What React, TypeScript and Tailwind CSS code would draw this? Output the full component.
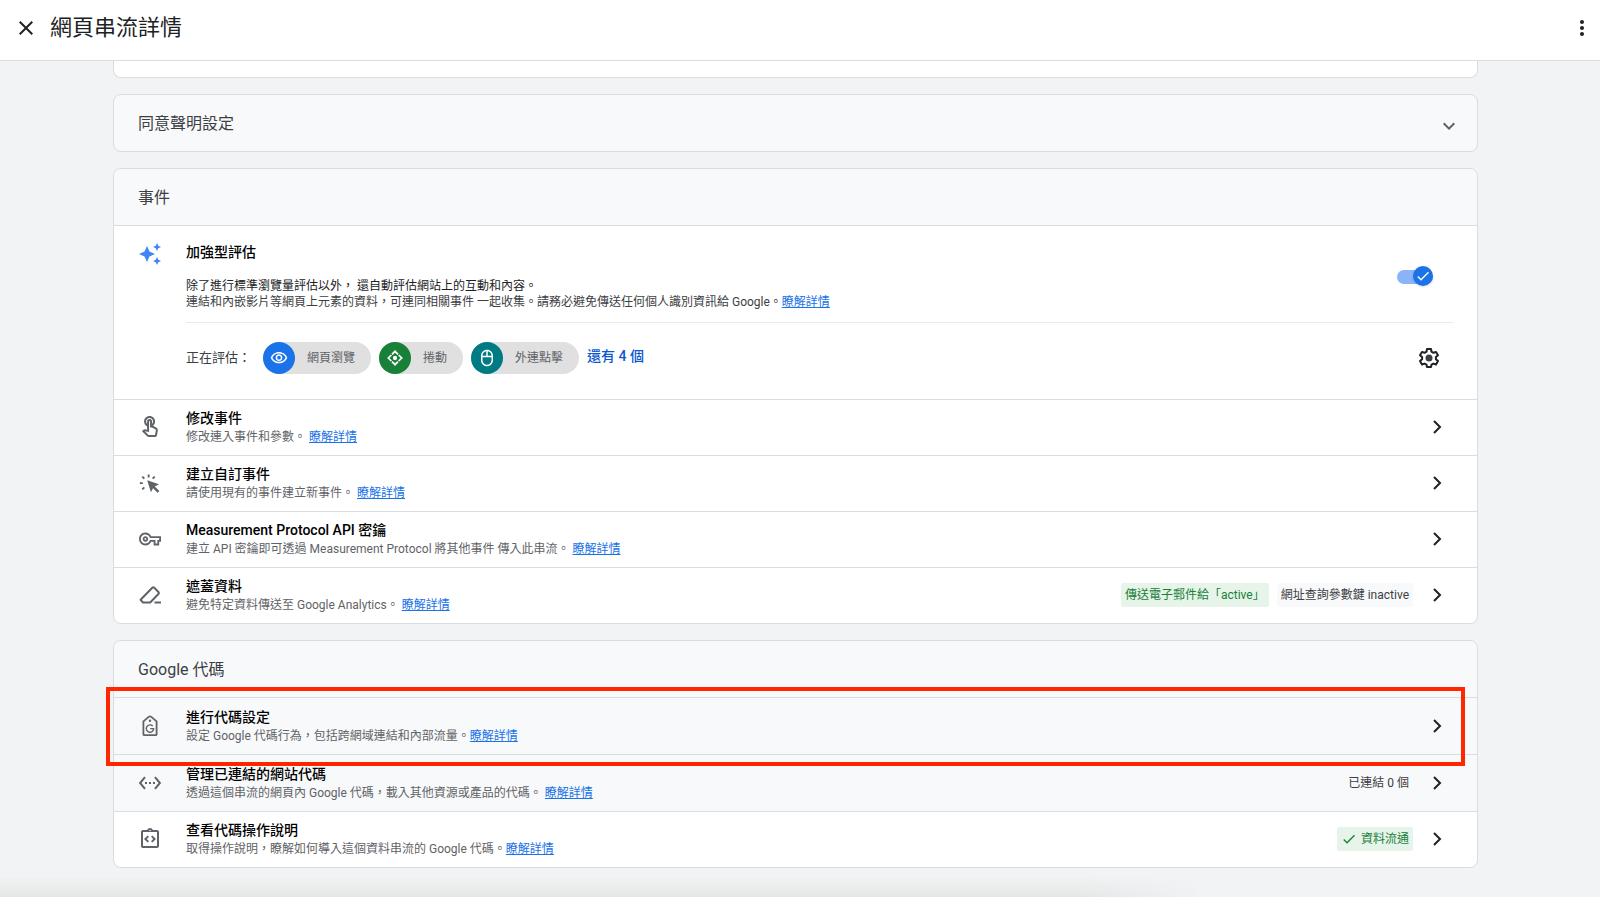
import type { ReactNode } from "react"
import {
  MdAutoAwesome,
  MdCheck,
  MdClose,
  MdKeyboardArrowDown,
  MdMoreVert,
  MdOutlineIntegrationInstructions,
  MdOutlineMouse,
  MdOutlineTouchApp,
  MdOutlineVisibility,
  MdOutlineVpnKey,
  MdSettingsEthernet,
} from "react-icons/md"

function MoreLink() {
  return (
    <a href="#more" className="text-[#1a73e8] underline">
      瞭解詳情
    </a>
  )
}

function ChevronRight() {
  return (
    <svg viewBox="0 0 24 24" className="size-6 shrink-0" fill="none" stroke="#202124" strokeWidth="2">
      <path d="M9 6l6 6-6 6" />
    </svg>
  )
}

function ClickIcon() {
  return (
    <svg viewBox="0 0 24 24" className="size-6" fill="#5f6368">
      <path d="M9.200 9.200l11.800 4-4.200 2.200 4.600 4.600-1.800 1.800-4.600-4.600-2.100 4z" />
      <path d="M9.700 3.500h1.900v3H9.700zM1.800 11.200h3v1.900h-3zM3.600 6.200L5 4.900 7 7 5.700 8.300zM14 7l2-2.100 1.400 1.300-2.100 2.100zM3.600 17.800l2.100-2.100L7 17l-2.100 2.100z" />
    </svg>
  )
}

function EraserIcon() {
  return (
    <svg viewBox="0 0 24 24" className="size-6" fill="none" stroke="#5f6368" strokeWidth="2" strokeLinejoin="round">
      <path d="M5 19.500h7.200l8.200-8.500c.6-.6.6-1.400 0-2l-4.100-4.200c-.6-.6-1.400-.6-2 0L2.600 16.800z" />
      <path d="M16.500 19.500H23" />
    </svg>
  )
}

function TagIcon() {
  return (
    <svg viewBox="0 0 24 24" className="size-6" fill="none" stroke="#5f6368" strokeWidth="1.800">
      <path d="M5.400 7.400l5.300-4.500c.8-.6 1.800-.6 2.600 0l5.300 4.500v12.800c0 .6-.4 1-1 1H6.400c-.6 0-1-.4-1-1z" strokeLinejoin="round" />
      <circle cx="12" cy="6.800" r="1.200" fill="#5f6368" stroke="none" />
      <path d="M14.700 12a3.700 3.700 0 1 0 1 2.600h-3.500" strokeWidth="1.400" />
    </svg>
  )
}

function ScrollIcon() {
  return (
    <svg viewBox="0 0 24 24" className="size-4" fill="none" stroke="currentColor" strokeWidth="2.600">
      <path d="M7.500 6.500L12 2l4.500 4.500M7.500 17.500L12 22l4.500-4.500M6.500 7.500L2 12l4.500 4.500M17.500 7.500L22 12l-4.500 4.500" />
      <circle cx="12" cy="12" r="3.200" fill="currentColor" stroke="none" />
    </svg>
  )
}

function GearIcon() {
  return (
    <svg viewBox="0 0 24 24" className="size-6" fill="none" stroke="#202124" strokeWidth="2" strokeLinejoin="round">
      <path d="M10 3h4l.5 2.700 1.900 1.100 2.600-.9 2 3.400-2.100 1.800v2.200l2.100 1.800-2 3.400-2.600-.9-1.900 1.100L14 21h-4l-.5-2.300-1.900-1.100-2.600.9-2-3.400 2.100-1.800v-2.200L3 9.300l2-3.400 2.600.9 1.900-1.100z" />
      <circle cx="12" cy="12" r="3.500" fill="#3c4043" stroke="none" />
    </svg>
  )
}

type ChipProps = { icon: ReactNode; label: string; color: string }

function Chip({ icon, label, color }: ChipProps) {
  return (
    <span className="flex h-8 items-center rounded-full bg-[#e0e0e0] pr-4 text-xs text-[#5f6368]">
      <span className={`mr-3 flex size-8 items-center justify-center rounded-full text-white ${color}`}>{icon}</span>
      {label}
    </span>
  )
}

type RowProps = {
  icon: ReactNode
  title: string
  text: string
  end?: ReactNode
  className?: string
  children?: ReactNode
}

function Row({ icon, title, text, end, className = "", children }: RowProps) {
  return (
    <li className={`relative flex items-center border-t border-[#dadce0] pr-7 pl-6 ${className}`}>
      <span className="mr-6 flex size-6 shrink-0 items-center justify-center text-[#5f6368]">{icon}</span>
      <div className="min-w-0 flex-1">
        <h3 className="text-sm leading-5 font-medium text-black">{title}</h3>
        <p className="text-xs leading-[18px] text-[#5f6368]">
          {text}
          <MoreLink />
        </p>
      </div>
      {end}
      <button type="button" aria-label={title} className="ml-3">
        <ChevronRight />
      </button>
      {children}
    </li>
  )
}

function Badge({ tone, children }: { tone: string; children: ReactNode }) {
  return <span className={`flex h-6 items-center gap-1 rounded-xs px-1 text-xs ${tone}`}>{children}</span>
}

export default function App() {
  return (
    <div className="relative flex min-h-screen flex-col bg-[#f1f3f4] font-[Roboto,'Noto_Sans_CJK_TC',sans-serif] text-[#3c4043]">
      <header className="flex h-[61px] items-center border-b border-[#dadce0] bg-white px-3.5 pb-1">
        <button type="button" aria-label="關閉" className="mr-3">
          <MdClose className="size-6 text-[#202124]" />
        </button>
        <h1 className="flex-1 text-[22px] leading-7 text-[#202124]">網頁串流詳情</h1>
        <button type="button" aria-label="更多選項" className="-mr-2">
          <MdMoreVert className="size-6 text-[#202124]" />
        </button>
      </header>

      <main className="flex-1 pr-[122px] pl-[113px]">
        <div className="mb-4 h-[17px] rounded-b-lg border border-t-0 border-[#dadce0] bg-white" />

        <section className="mb-4 flex h-[58px] items-center justify-between rounded-lg border border-[#dadce0] bg-[#f8f9fa] px-6">
          <h2 className="pt-0.5 text-base">同意聲明設定</h2>
          <button type="button" aria-label="展開" className="-mr-2 pt-1.5">
            <MdKeyboardArrowDown className="size-6 text-[#5f6368]" />
          </button>
        </section>

        <section className="mb-4 rounded-lg border border-[#dadce0] bg-white">
          <h2 className="flex h-14 items-center rounded-t-lg bg-[#f8f9fa] px-6 pt-0.5 text-base">事件</h2>

          <div className="flex h-[174px] border-t border-[#dadce0] px-6">
            <MdAutoAwesome className="mt-4 mr-6 size-6 shrink-0 text-[#4285f4]" />
            <div className="flex-1">
              <div className="flex h-[97px] items-center justify-between border-b border-[#e8eaed] pt-1">
                <div>
                  <h3 className="mb-4 text-sm leading-5 font-medium text-black">加強型評估</h3>
                  <p className="text-xs leading-4 text-[#202124]">
                    除了進行標準瀏覽量評估以外， 還自動評估網站上的互動和內容。
                  </p>
                  <p className="text-xs leading-4">
                    連結和內嵌影片等網頁上元素的資料，可連同相關事件 一起收集。請務必避免傳送任何個人識別資訊給 Google。
                    <MoreLink />
                  </p>
                </div>
                <label className="relative mr-5 block h-5 w-9 shrink-0">
                  <input type="checkbox" role="switch" defaultChecked aria-label="加強型評估" className="peer sr-only" />
                  <span className="absolute inset-x-0 top-1 h-3.5 rounded-full bg-[#8ab4f8]" />
                  <span className="absolute top-0 right-0 flex size-5 items-center justify-center rounded-full bg-[#1a73e8] shadow">
                    <MdCheck className="size-4 text-white" />
                  </span>
                </label>
              </div>

              <div className="flex h-[70px] items-center">
                <span className="mr-3 text-[13px]">正在評估：</span>
                <div className="flex flex-1 items-center gap-2">
                  <Chip icon={<MdOutlineVisibility className="size-[18px]" />} label="網頁瀏覽" color="bg-[#1a73e8]" />
                  <Chip icon={<ScrollIcon />} label="捲動" color="bg-[#188038]" />
                  <Chip icon={<MdOutlineMouse className="size-[18px]" />} label="外連點擊" color="bg-[#007b83]" />
                  <a href="#all" className="pb-1 text-sm font-medium text-[#0b57d0]">
                    還有 4 個
                  </a>
                </div>
                <button type="button" aria-label="設定" className="mr-3">
                  <GearIcon />
                </button>
              </div>
            </div>
          </div>

          <ul>
            <Row className="h-14 pb-0.5" icon={<MdOutlineTouchApp className="size-6" />} title="修改事件" text="修改連入事件和參數。 " />
            <Row className="h-14 pb-0.5" icon={<ClickIcon />} title="建立自訂事件" text="請使用現有的事件建立新事件。 " />
            <Row
              className="h-14 pb-0.5"
              icon={<MdOutlineVpnKey className="size-[22px]" />}
              title="Measurement Protocol API 密鑰"
              text="建立 API 密鑰即可透過 Measurement Protocol 將其他事件 傳入此串流。 "
            />
            <Row
              className="h-14 pb-0.5"
              icon={<EraserIcon />}
              title="遮蓋資料"
              text="避免特定資料傳送至 Google Analytics。 "
              end={
                <div className="flex gap-2">
                  <Badge tone="bg-[#e6f4ea] text-[#188038]">傳送電子郵件給「active」</Badge>
                  <Badge tone="bg-[#f8f9fa]">網址查詢參數鍵 inactive</Badge>
                </div>
              }
            />
          </ul>
        </section>

        <section className="rounded-lg border border-[#dadce0] bg-white">
          <h2 className="flex h-14 items-center rounded-t-lg bg-[#f8f9fa] px-6 pt-0.5 text-base">Google 代碼</h2>
          <ul>
            <Row
              className="h-[57px] bg-[#f8f9fa]"
              icon={<TagIcon />}
              title="進行代碼設定"
              text="設定 Google 代碼行為，包括跨網域連結和內部流量。"
            >
              {/* highlight frame */}
              <span className="pointer-events-none absolute -top-[11px] right-3 -bottom-3 -left-2 z-10 border-4 border-[#ff2600]" />
            </Row>
            <Row
              className="h-[57px] bg-[#f8f9fa]"
              icon={<MdSettingsEthernet className="size-6" />}
              title="管理已連結的網站代碼"
              text="透過這個串流的網頁內 Google 代碼，載入其他資源或產品的代碼。 "
              end={<Badge tone="">已連結 0 個</Badge>}
            />
            <Row
              className="h-14 pb-0.5"
              icon={<MdOutlineIntegrationInstructions className="size-6" />}
              title="查看代碼操作說明"
              text="取得操作說明，瞭解如何導入這個資料串流的 Google 代碼。"
              end={
                <Badge tone="bg-[#e6f4ea] text-[#188038]">
                  <MdCheck className="size-4" />
                  資料流通
                </Badge>
              }
            />
          </ul>
        </section>
      </main>

      {/* soft shade along the bottom edge */}
      <div className="pointer-events-none absolute bottom-0 left-0 h-5 w-3/4 bg-linear-to-b from-transparent to-[#e6e6e6] mask-r-from-90%" />
    </div>
  )
}
